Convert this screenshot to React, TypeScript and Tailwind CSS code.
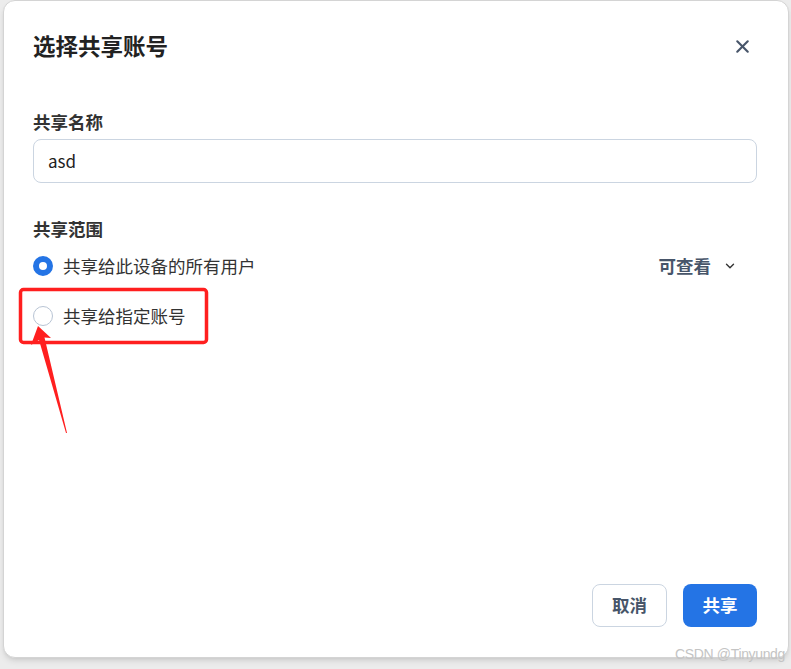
import { X, ChevronDown } from "lucide-react";

const font = { fontFamily: '"Noto Sans CJK SC", "Noto Sans", sans-serif' };

function Radio({ checked, label }: { checked: boolean; label: string }) {
  return (
    <div className="flex items-center h-[50px]">
      {checked ? (
        <span className="w-5 h-5 rounded-full border-[6px] border-[#2474e5] bg-white" />
      ) : (
        <span className="w-5 h-5 rounded-full border border-[#b8c4d4] bg-white" />
      )}
      <span className="ml-[10px] text-[17.5px] text-[#333]">{label}</span>
    </div>
  );
}

export default function App() {
  return (
    <div className="relative w-[791px] h-[669px] bg-[#ececec] overflow-hidden" style={font}>
      {/* dialog */}
      <div className="ml-[3px] w-[786px] h-[658px] bg-white rounded-xl border border-[#d4d4d4] shadow-md flex flex-col pl-[29px] pr-[31px] pb-[30px]">
        <div className="flex items-center justify-between h-[40px] mt-[25px]">
          <h2 className="text-[22.5px] font-bold text-[#222]">选择共享账号</h2>
          <X className="w-[21px] h-[21px] mr-[4px] text-[#475569]" strokeWidth={2.4} />
        </div>

        <div className="mt-[44px] text-[17.5px] leading-[24px] font-bold text-[#333]">共享名称</div>
        <div className="mt-[5px] h-[44px] rounded-lg border border-[#cbd5e1] flex items-center px-[14px] text-[17px] text-[#222]">
          asd
        </div>

        <div className="mt-[34px] text-[17.5px] leading-[24px] font-bold text-[#333]">共享范围</div>
        <div className="flex items-center justify-between">
          <Radio checked label="共享给此设备的所有用户" />
          <div className="flex items-center mr-[20px]">
            <span className="text-[17.5px] font-bold text-[#475569]">可查看</span>
            <ChevronDown className="ml-[12px] w-[14px] h-[14px] text-[#333]" strokeWidth={2.4} />
          </div>
        </div>
        <Radio checked={false} label="共享给指定账号" />

        <div className="mt-auto flex justify-end gap-4">
          <button className="w-[75px] h-[43px] rounded-lg border border-[#cbd5e1] bg-white text-[17.5px] font-bold text-[#475569]">
            取消
          </button>
          <button className="w-[74px] h-[43px] rounded-lg bg-[#2474e5] text-[17.5px] font-bold text-white">
            共享
          </button>
        </div>
      </div>

      {/* annotation */}
      <svg className="absolute inset-0 pointer-events-none" width="791" height="669">
        <rect x="20.5" y="289.5" width="186" height="53" rx="3" fill="none" stroke="#ff1f1f" strokeWidth="3.5" />
        <polygon points="38,326 51,338 44.5,337.5 67,433 66,433 39,340 31,345" fill="#ff1f1f" />
      </svg>

      <div className="absolute right-[6px] bottom-[4px] text-[14px] text-[#c4c4c4] tracking-tight" style={{ fontFamily: '"Liberation Sans", sans-serif' }}>
        CSDN @Tinyundg
      </div>
    </div>
  );
}
